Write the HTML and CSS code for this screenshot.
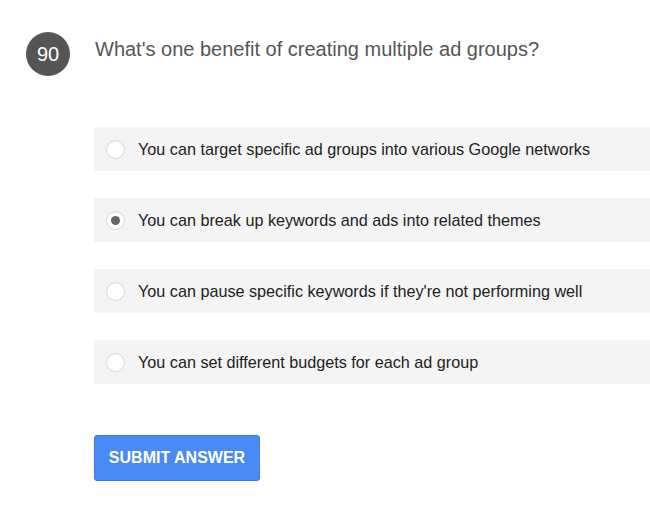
FILE: index.html
```html
<!DOCTYPE html>
<html>
<head>
    <title>Quiz</title>
    <link rel="stylesheet" href="styles.css">
</head>
<body>
    <div class="question">
        <div class="number">90</div>
        <div class="question-body">
            <p class="question-text">What's one benefit of creating multiple ad groups?</p>

            <div class="answers">
                <label class="answer">
                    <span class="radio"></span>
                    <span>You can target specific ad groups into various Google networks</span>
                </label>
                <label class="answer">
                    <span class="radio checked"></span>
                    <span>You can break up keywords and ads into related themes</span>
                </label>
                <label class="answer">
                    <span class="radio"></span>
                    <span>You can pause specific keywords if they're not performing well</span>
                </label>
                <label class="answer">
                    <span class="radio"></span>
                    <span>You can set different budgets for each ad group</span>
                </label>
            </div>

            <button class="submitBtn">Submit Answer</button>
        </div>
    </div>
</body>
</html>
```

FILE: styles.css
```css
* {
    box-sizing: border-box;
}

body {
    margin: 0;
    padding: 32px 0 0 26px;
    font-family: Arial, "Liberation Sans", sans-serif;
    background-color: #fff;
}

.question {
    display: flex;
    align-items: flex-start;
}

.number {
    flex: 0 0 44px;
    width: 44px;
    height: 44px;
    border-radius: 50%;
    background-color: #555;
    color: #fff;
    font-size: 20px;
    display: flex;
    align-items: center;
    justify-content: center;
}

.question-body {
    flex: 1;
    margin-left: 24px;
}

.question-text {
    margin: 5px 0 0 1px;
    font-size: 20px;
    color: #555;
    line-height: 24px;
}

.answers {
    margin-top: 66px;
    display: flex;
    flex-direction: column;
    gap: 27px;
}

.answer {
    display: flex;
    align-items: center;
    height: 44px;
    padding-left: 12px;
    background-color: #f4f4f4;
    font-size: 16.2px;
    color: #222;
    cursor: pointer;
}

.radio {
    width: 19px;
    height: 19px;
    border-radius: 50%;
    border: 1px solid #d9d9d9;
    background-color: #fff;
    box-shadow: inset 0 1px 1px rgba(0, 0, 0, 0.04);
    margin-right: 13px;
    display: flex;
    align-items: center;
    justify-content: center;
}

.radio.checked::after {
    content: "";
    width: 9px;
    height: 9px;
    border-radius: 50%;
    background-color: #666;
}

.submitBtn {
    margin-top: 51px;
    width: 166px;
    height: 46px;
    border: 1px solid #3b78e0;
    border-radius: 3px;
    background-color: #4a8af4;
    color: #fff;
    font-family: Arial, "Liberation Sans", sans-serif;
    font-size: 16px;
    font-weight: bold;
    text-transform: uppercase;
    cursor: pointer;
}
```
